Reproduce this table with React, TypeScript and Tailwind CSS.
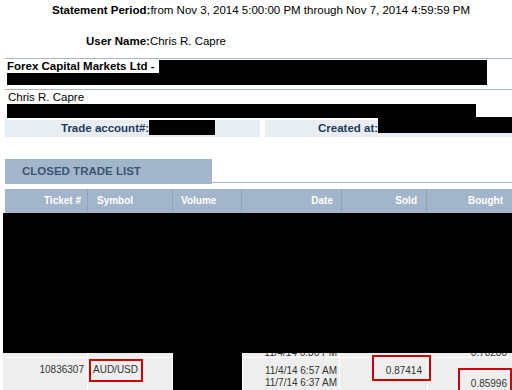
export default function App() {
  return (
    <div className="w-[512px] h-[390px] overflow-hidden bg-white font-['Liberation_Sans',Arial,sans-serif] text-black">
      {/* statement header */}
      <div className="h-[21px] pt-[3px] pl-[52px] text-[11.5px] leading-[14px] whitespace-nowrap">
        <b>Statement Period:</b>from Nov 3, 2014 5:00:00 PM through Nov 7, 2014 4:59:59 PM
      </div>
      <div className="h-[37px] pt-[13px] pl-[86px] text-[11.5px] leading-[14px]">
        <b>User Name:</b>Chris R. Capre
      </div>

      {/* broker block */}
      <div className="ml-[5px] border-t border-[#a9b6c4]">
        <div className="flex h-[31px] border-b border-[#a9b6c4]">
          <div className="w-[154px]">
            <div className="pl-[2px] text-[11.5px] leading-[14px] font-bold whitespace-nowrap">Forex Capital Markets Ltd -</div>
            <div className="ml-[2px] h-[12px] bg-black" />
          </div>
          <div className="mt-[1px] h-[25px] w-[328px] bg-black" />
        </div>
        <div className="pl-[3px] text-[11.5px] leading-[14px]">Chris R. Capre</div>
        <div className="ml-[2px] h-[14px] w-[469px] bg-black" />
        <div className="mt-[2px] flex gap-[5px] h-[17px] text-[11.5px] leading-[17px] font-bold text-[#1f3a5f]">
          <div className="w-[255px] flex items-start bg-[#e8edf2] pl-[56px]">
            <span>Trade account#:</span>
            <div className="h-[15px] w-[66px] bg-black" />
          </div>
          <div className="flex-1 flex items-start bg-[#e8edf2] pl-[53px]">
            <span>Created at:</span>
            <div className="-mt-[3px] h-[16px] flex-1 bg-black" />
          </div>
        </div>
      </div>

      {/* closed trade list tab */}
      <div className="mt-[22px] ml-[5px] flex items-end">
        <div className="w-[207px] h-[25px] bg-[#a3b5cb] pl-[17px] text-[11.5px] leading-[24px] font-bold text-[#3b5573]">
          CLOSED TRADE LIST
        </div>
        <div className="flex-1 h-px bg-[#a9b6c4] mb-[1px]" />
      </div>

      {/* table header */}
      <div className="mt-[5px] ml-[5px] grid grid-cols-[83px_85px_69px_100px_85px_1fr] h-[24px] text-[10px] leading-[23px] font-bold text-white">
        <div className="bg-[#a3b5cb] border-r border-[#8ea3bd] text-right pr-[6px]">Ticket #</div>
        <div className="bg-[#a3b5cb] border-r border-[#8ea3bd] pl-[9px]">Symbol</div>
        <div className="bg-[#a3b5cb] border-r border-[#8ea3bd] pl-[8px]">Volume</div>
        <div className="bg-[#a3b5cb] border-r border-[#8ea3bd] text-right pr-[8px]">Date</div>
        <div className="bg-[#a3b5cb] border-r border-[#8ea3bd] text-right pr-[9px]">Sold</div>
        <div className="bg-[#a3b5cb] text-right pr-[9px]">Bought</div>
      </div>

      {/* redacted rows */}
      <div className="ml-[3px] h-[140px] bg-black" />

      {/* visible rows */}
      <div className="relative ml-[3px]">
        <div className="grid grid-cols-[84px_84px_69px_96px_87px_1fr] grid-rows-[4px_32px] gap-px bg-white text-[10px] leading-[12px] text-[#333]">
          <div className="bg-[#eeeeee]" />
          <div className="bg-[#eeeeee]" />
          <div className="row-span-2 bg-black" />
          <div className="bg-[#eeeeee] overflow-hidden flex items-end justify-end pr-[2px]">
            <span className="-mb-[2px] whitespace-nowrap">11/4/14 6:36 PM</span>
          </div>
          <div className="bg-[#eeeeee]" />
          <div className="bg-[#eeeeee] overflow-hidden flex items-end justify-end pr-[5px]">
            <span className="-mb-[2px]">0.78280</span>
          </div>

          <div className="bg-[#eeeeee] text-right pr-[3px] pt-[6px]">10836307</div>
          <div className="bg-[#eeeeee] pl-[5px] pt-[6px]">AUD/USD</div>
          <div className="bg-[#eeeeee] text-right pr-[2px] pt-[7px] whitespace-nowrap">
            <div>11/4/14 6:57 AM</div>
            <div>11/7/14 6:37 AM</div>
          </div>
          <div className="bg-[#eeeeee] text-right pr-[5px] pt-[7px]">0.87414</div>
          <div className="bg-[#eeeeee] text-right pr-[5px] pt-[20px]">0.85996</div>
        </div>

        {/* annotation boxes */}
        <div className="absolute left-[86px] top-[6px] w-[54px] h-[23px] border-2 border-[#cc0000]" />
        <div className="absolute left-[369px] top-[2px] w-[59px] h-[26px] border-2 border-[#cc0000]" />
        <div className="absolute left-[455px] top-[15px] w-[54px] h-[25px] border-2 border-[#cc0000]" />
      </div>
    </div>
  )
}
